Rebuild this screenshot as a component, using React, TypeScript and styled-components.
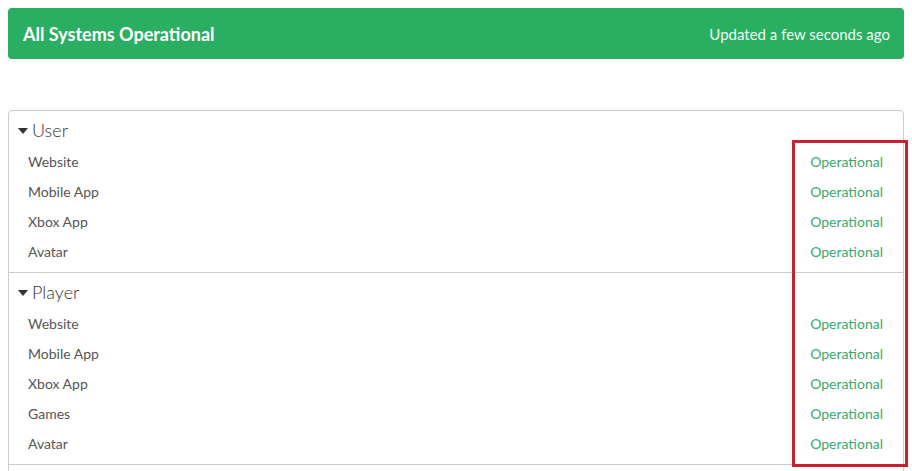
import React from 'react';
import styled, { createGlobalStyle } from 'styled-components';

const GlobalStyle = createGlobalStyle`
  body {
    margin: 0;
    background: #ffffff;
    font-family: Lato, "Open Sans", "Liberation Sans", sans-serif;
  }
`;

const Page = styled.div`
  padding: 8px;
`;

const Banner = styled.header`
  display: flex;
  align-items: center;
  justify-content: space-between;
  height: 51px;
  padding: 0 14px 0 15px;
  border-radius: 4px;
  background: #2aae62;
  color: #ffffff;
`;

const BannerTitle = styled.h1`
  margin: 0;
  font-size: 18px;
  font-weight: 700;
`;

const BannerNote = styled.span`
  font-size: 15px;
  color: #eefaf2;
`;

const Panel = styled.section`
  position: relative;
  margin-top: 51px;
  border: 1px solid #cccccc;
  border-radius: 4px;
  padding-bottom: 30px;
`;

const Group = styled.div`
  padding-bottom: 6px;
  border-bottom: 1px solid #cccccc;
`;

const GroupHeader = styled.div`
  display: flex;
  align-items: center;
  gap: 4px;
  padding: 5px 9px 2px;
  height: 28px;
  font-size: 18px;
  font-weight: 300;
  color: #333333;
`;

const Caret = styled.span`
  width: 0;
  height: 0;
  border-left: 5px solid transparent;
  border-right: 5px solid transparent;
  border-top: 6px solid #333333;
  margin-top: 1px;
`;

const Row = styled.div`
  display: flex;
  align-items: center;
  justify-content: space-between;
  height: 30px;
  padding: 0 20px 0 19px;
  font-size: 14px;
`;

const Name = styled.span`
  color: #555555;
`;

const Status = styled.span`
  color: #3aa86c;
`;

const Highlight = styled.div`
  position: absolute;
  left: 783px;
  top: 29px;
  width: 110px;
  height: 321px;
  border: 3px solid #c9212e;
  pointer-events: none;
`;

const groups = [
  { title: 'User', items: ['Website', 'Mobile App', 'Xbox App', 'Avatar'] },
  { title: 'Player', items: ['Website', 'Mobile App', 'Xbox App', 'Games', 'Avatar'] },
];

export default function App() {
  return (
    <>
      <GlobalStyle />
      <Page>
        <Banner>
          <BannerTitle>All Systems Operational</BannerTitle>
          <BannerNote>Updated a few seconds ago</BannerNote>
        </Banner>
        <Panel>
          {groups.map((g) => (
            <Group key={g.title}>
              <GroupHeader>
                <Caret />
                {g.title}
              </GroupHeader>
              {g.items.map((item) => (
                <Row key={item}>
                  <Name>{item}</Name>
                  <Status>Operational</Status>
                </Row>
              ))}
            </Group>
          ))}
          <Highlight />
        </Panel>
      </Page>
    </>
  );
}
